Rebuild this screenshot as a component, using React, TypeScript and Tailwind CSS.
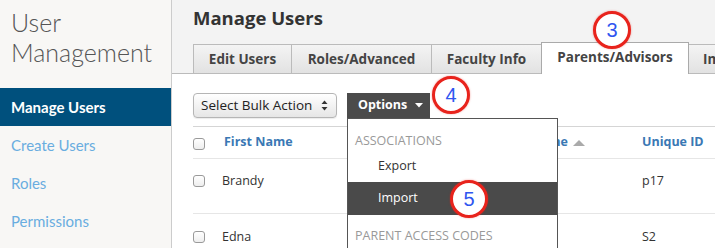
import React from "react";

const sans = { fontFamily: '"Open Sans", "Noto Sans", sans-serif' };

function Checkbox() {
  return <span className="inline-block h-[12px] w-[12px] rounded-[3px] border border-[#9a9a9a] bg-gradient-to-b from-white to-[#eeeeee]" />;
}

function Badge({ n, className }: { n: string; className: string }) {
  return (
    <div
      className={`absolute z-20 flex h-[38px] w-[38px] items-center justify-center rounded-full border-[3px] border-[#e8231c] bg-white text-[20px] leading-none text-[#2f55f0] shadow-[0_0_2px_rgba(232,35,28,0.5)] ${className}`}
      style={{ fontFamily: '"Liberation Sans", Arial, sans-serif' }}
    >
      {n}
    </div>
  );
}

export default function App() {
  const tabBase = "flex shrink-0 items-center justify-center whitespace-nowrap text-[13.5px] font-bold text-[#444]";
  return (
    <div className="relative flex h-[248px] w-[715px] overflow-hidden bg-white">
      <aside
        className="w-[172px] shrink-0 border-r border-[#cccccc] bg-[#f8f7f5]"
        style={{ fontFamily: 'Lato, "Open Sans", sans-serif' }}
      >
        <div className="pl-[11px] pt-[7px] text-[25px] font-light leading-[30px] text-[#555555]">
          User
          <br />
          Management
        </div>
        <nav className="mt-[21px]">
          <div className="flex h-[38px] items-center bg-[#00507d] pl-[11px] text-[15px] font-bold text-white">Manage Users</div>
          <div className="flex h-[38px] items-center pl-[11px] text-[15px] text-[#69ade0]">Create Users</div>
          <div className="flex h-[38px] items-center pl-[11px] text-[15px] text-[#69ade0]">Roles</div>
          <div className="flex h-[38px] items-center pl-[11px] text-[15px] text-[#69ade0]">Permissions</div>
        </nav>
      </aside>

      <main className="flex min-w-0 flex-1 flex-col" style={sans}>
        <header className="flex h-[74px] shrink-0 flex-col border-b border-[#bbbbbb] bg-[#f3f3f3]">
          <h1 className="pl-[21px] pt-[5px] text-[18.5px] font-bold leading-[26px] text-[#333333]">Manage Users</h1>
          <div className="-mb-px mt-auto flex items-end pl-[21px]">
            <div className={`${tabBase} h-[30px] w-[98px] border-y border-l border-[#bbbbbb] bg-gradient-to-b from-[#f4f4f4] to-[#e2e2e2]`}>Edit Users</div>
            <div className={`${tabBase} h-[30px] w-[140px] border-y border-l border-[#bbbbbb] bg-gradient-to-b from-[#f4f4f4] to-[#e2e2e2]`}>Roles/Advanced</div>
            <div className={`${tabBase} h-[30px] w-[110px] border-y border-l border-[#bbbbbb] bg-gradient-to-b from-[#f4f4f4] to-[#e2e2e2]`}>Faculty Info</div>
            <div className={`${tabBase} h-[32px] w-[148px] border-x border-t border-[#aaaaaa] bg-white pb-[2px]`}>Parents/Advisors</div>
            <div className={`${tabBase} h-[30px] w-[120px] justify-start border-y border-r border-[#bbbbbb] bg-gradient-to-b from-[#f4f4f4] to-[#e2e2e2] pl-[14px]`}>Imports</div>
          </div>
        </header>

        <section className="shrink-0 pl-[21px] pt-[19px]">
          <div className="flex items-center">
            <div className="flex h-[25px] w-[144px] shrink-0 items-center justify-between rounded-[4px] border border-[#b5b5b5] bg-gradient-to-b from-white to-[#e6e6e6] pl-[7px] pr-[8px] text-[13.5px] text-[#222222] shadow-[0_1px_1px_rgba(0,0,0,0.08)]">
              <span className="whitespace-nowrap">Select Bulk Action</span>
              <svg width="7" height="11" viewBox="0 0 7 11">
                <path d="M3.5 0.5 L6.5 4 L0.5 4 Z" fill="#333" />
                <path d="M3.5 10.5 L6.5 7 L0.5 7 Z" fill="#333" />
              </svg>
            </div>
            <div className="relative ml-[10px] shrink-0">
              <div className="flex h-[25px] w-[83px] items-center gap-[8px] bg-[#4b4b4b] pl-[11px] text-[12.5px] font-bold text-white">
                <span>Options</span>
                <svg width="8" height="5" viewBox="0 0 8 5">
                  <path d="M0 0 L8 0 L4 4.5 Z" fill="#ffffff" />
                </svg>
              </div>
              <div className="absolute left-0 top-full z-10 h-[140px] w-[211px] border border-[#555555] bg-white text-[12.5px]">
                <div className="flex h-[32px] items-end pb-0 pl-[7px] uppercase text-[#999999]">Associations</div>
                <div className="flex h-[31px] items-center pl-[30px] text-[#333333]">Export</div>
                <div className="flex h-[33px] items-center bg-[#4a4a4a] pl-[30px] text-white">Import</div>
                <div className="flex h-[32px] items-end pb-[1px] pl-[7px] uppercase text-[#999999]">Parent Access Codes</div>
              </div>
            </div>
          </div>

          <div className="mt-[8px] w-[600px] border-t border-[#d5d5d5] text-[12.5px]">
            <div className="grid h-[32px] grid-cols-[31px_279px_139px_1fr] items-center border-b border-[#e6e6e6] font-bold text-[#3a78b4]">
              <span className="flex pt-[2px]"><Checkbox /></span>
              <span>First Name</span>
              <span className="flex items-center justify-end gap-[5px] whitespace-nowrap pr-[57px]">
                <span className="whitespace-nowrap">Last Name</span>
                <svg className="shrink-0" width="12" height="6" viewBox="0 0 12 6"><path d="M0 6 L6 0 L12 6 Z" fill="#aaaaaa" /></svg>
              </span>
              <span>Unique ID</span>
            </div>
            <div className="grid h-[55px] grid-cols-[31px_279px_139px_1fr] items-start border-b border-[#e6e6e6] pt-[13px] leading-[18px] text-[#333333]">
              <span className="flex pt-[3px]"><Checkbox /></span>
              <span className="-ml-[2px]">Brandy</span>
              <span>Smith</span>
              <span>p17</span>
            </div>
            <div className="grid h-[55px] grid-cols-[31px_279px_139px_1fr] items-start pt-[14px] leading-[18px] text-[#333333]">
              <span className="flex pt-[3px]"><Checkbox /></span>
              <span className="-ml-[2px]">Edna</span>
              <span>Jones</span>
              <span>S2</span>
            </div>
          </div>
        </section>
      </main>

      <Badge n="3" className="left-[593px] top-[11px]" />
      <Badge n="4" className="left-[432px] top-[76px]" />
      <Badge n="5" className="left-[450px] top-[180px]" />
    </div>
  );
}
